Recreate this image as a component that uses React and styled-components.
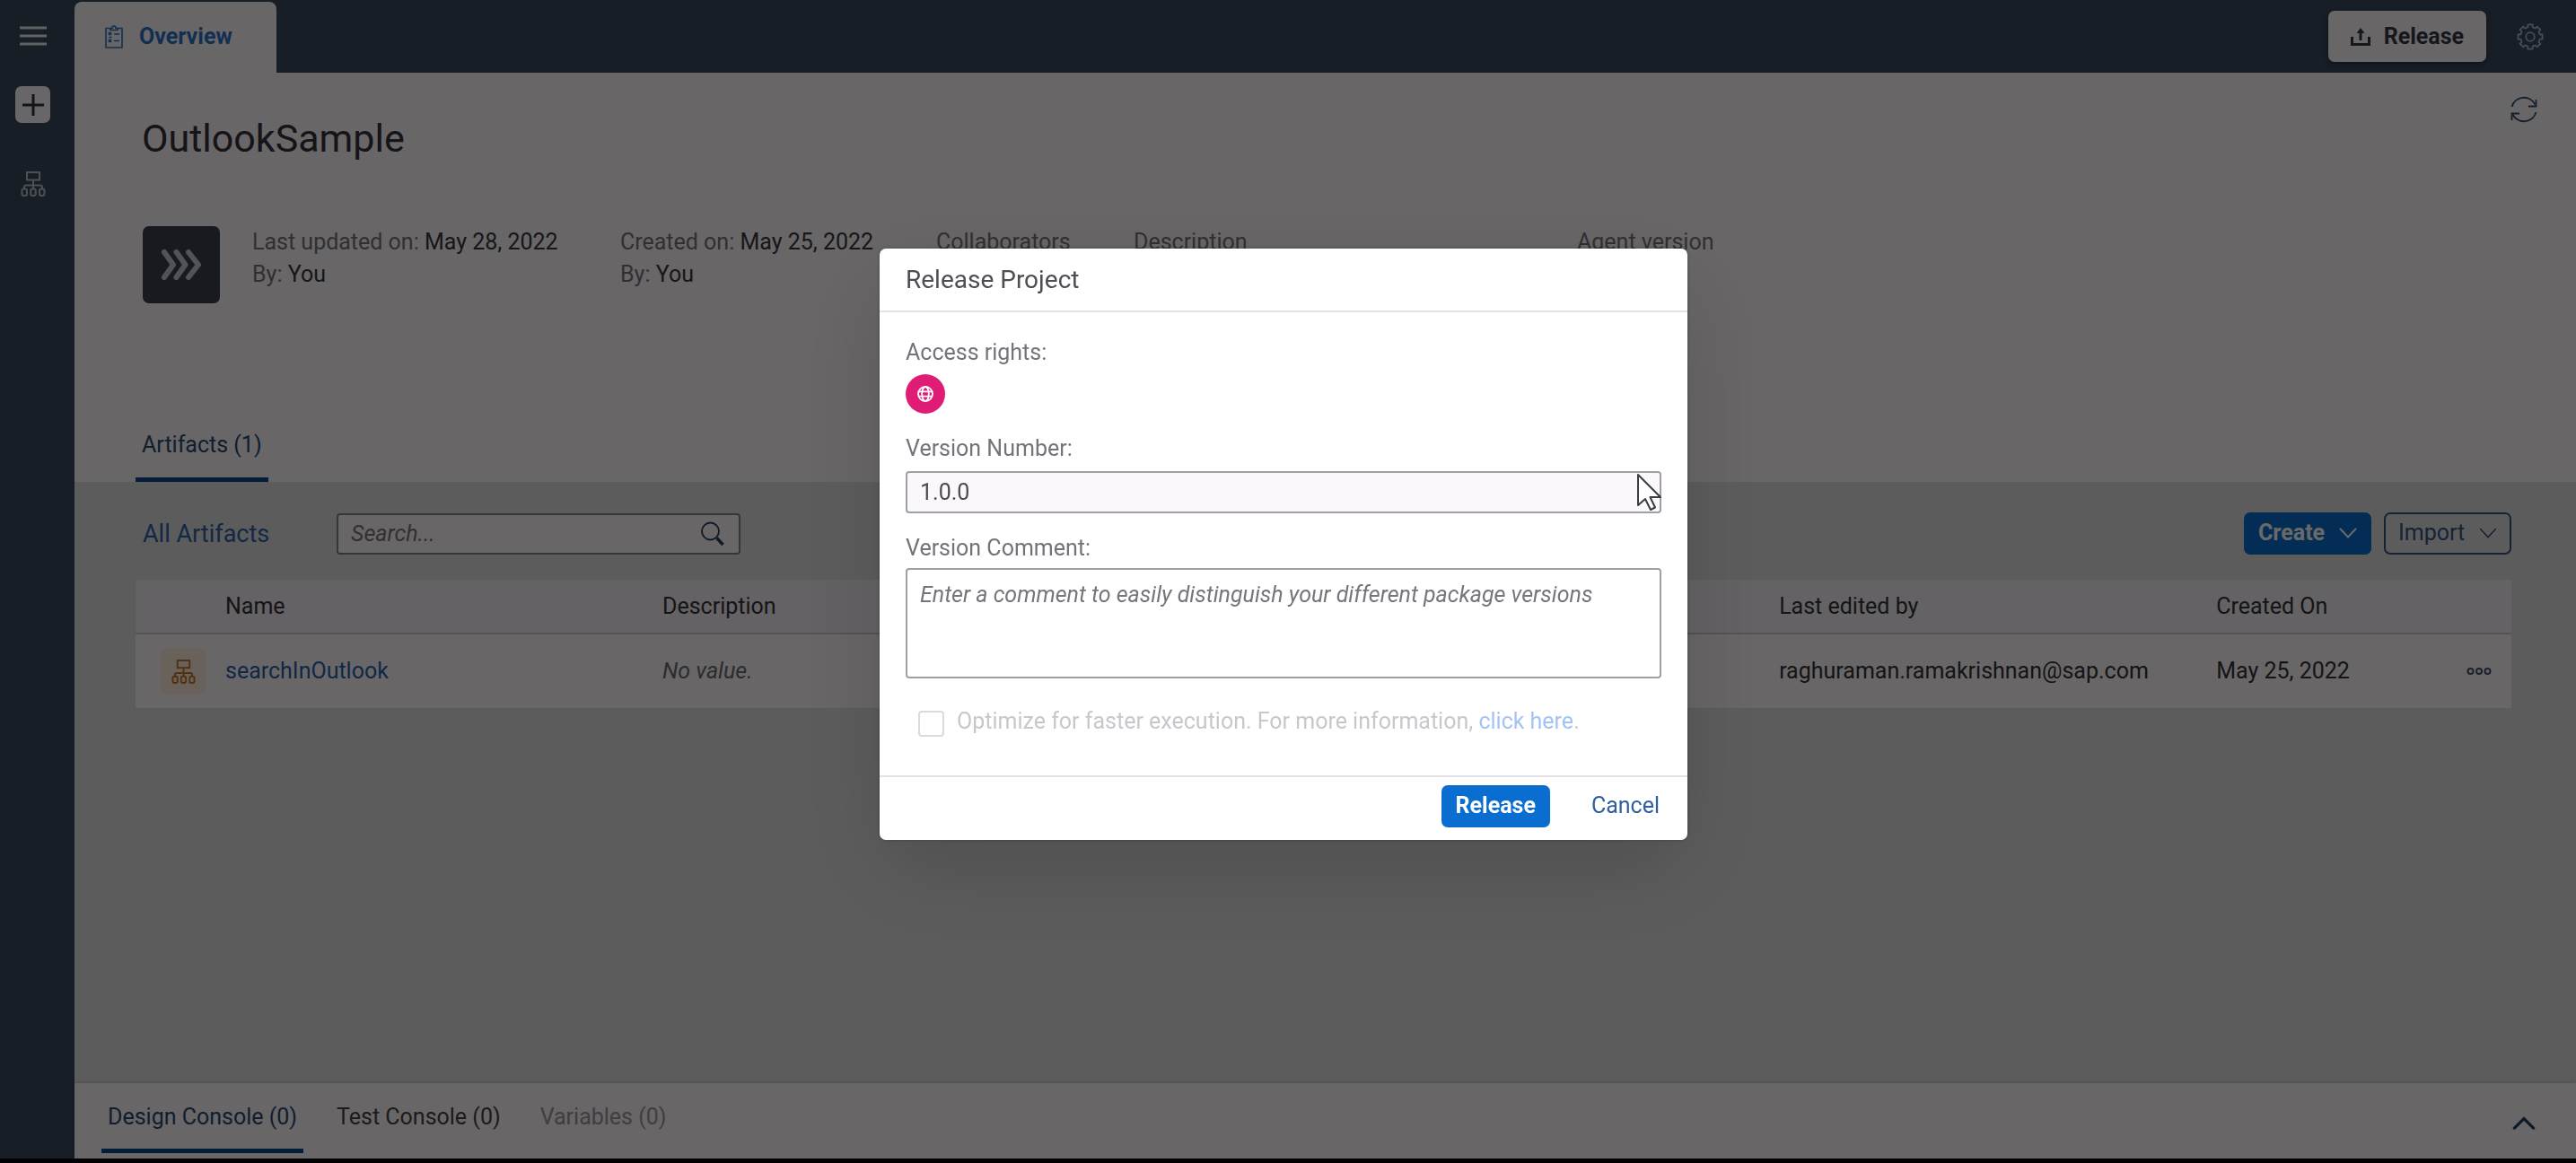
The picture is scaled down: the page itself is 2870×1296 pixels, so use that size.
import React from "react";
import styled, { createGlobalStyle, css } from "styled-components";

const GlobalStyle = createGlobalStyle`
  *, *::before, *::after { box-sizing: border-box; }
  html, body { margin: 0; background: #000; }
  body, button, input, textarea {
    font-family: Roboto, "Liberation Sans", sans-serif;
    font-size: 25px;
    line-height: 36px;
  }
  h1, h2, p { margin: 0; font-weight: 400; }
  button { cursor: pointer; }
`;

const Page = styled.div`
  min-height: 100vh;
  display: flex;
  padding-bottom: 5px;
  background: #000;
`;

const SideBar = styled.nav`
  flex: 0 0 83px;
  display: flex;
  flex-direction: column;
  align-items: center;
  padding: 20px 10px 0 0;
  background: #38495e;
`;

const IconButton = styled.button`
  display: flex;
  align-items: center;
  justify-content: center;
  padding: 0;
  border: 0;
  background: none;
  color: ${(p) => p.$color || "#fff"};
`;

const MenuButton = styled(IconButton)`
  width: 40px;
  height: 40px;
`;

const AddButton = styled(IconButton)`
  width: 39px;
  height: 41px;
  margin-top: 36px;
  border-radius: 7px;
  background: #fff7ff;
`;

const FlowButton = styled(IconButton)`
  width: 40px;
  height: 40px;
  margin-top: 48px;
`;

const Main = styled.div`
  flex: 1;
  min-width: 0;
  display: flex;
  flex-direction: column;
  background: #e0e0e0;
`;

const TopBar = styled.header`
  display: flex;
  align-items: center;
  height: 81px;
  padding-right: 36px;
  background: #38495e;
`;

const OverviewTab = styled.button`
  align-self: flex-end;
  display: flex;
  align-items: center;
  gap: 18px;
  width: 225px;
  height: 79px;
  padding: 0 0 2px 34px;
  border: 0;
  border-radius: 8px 8px 0 0;
  background: #fff7fd;
  color: #2d73c4;
  font-weight: 700;
`;

const ReleaseTopButton = styled.button`
  display: flex;
  align-items: center;
  gap: 15px;
  height: 57px;
  margin: 0 34px 0 auto;
  padding: 0 25px;
  border: 0;
  border-radius: 7px;
  background: #fff7fd;
  box-shadow: 0 2px 6px rgba(0, 0, 0, 0.4);
  color: #333844;
  font-weight: 700;
`;

const ObjectHeader = styled.section`
  display: flex;
  flex-direction: column;
  height: 456px;
  padding: 20px 40px 0 68px;
  background: #fff7fd;
`;

const TitleRow = styled.div`
  display: flex;
  justify-content: space-between;
  align-items: flex-start;
  height: 151px;
  padding-left: 7px;
`;

const Title = styled.h1`
  padding-top: 27px;
  font-size: 43px;
  line-height: 52px;
  color: #33313a;
`;

const RefreshButton = styled(IconButton)`
  width: 36px;
  height: 42px;
`;

const Facts = styled.div`
  display: flex;
  padding-left: 8px;
`;

const Tile = styled.div`
  display: flex;
  align-items: center;
  justify-content: center;
  width: 86px;
  height: 86px;
  margin-right: 36px;
  border-radius: 7px;
  background: #3c414d;
  color: #c4ccd2;
`;

const Fact = styled.div`
  width: ${(p) => p.$width}px;
  color: #77737a;
  white-space: nowrap;

  b {
    color: #38363c;
    font-weight: 400;
  }
`;

const TabButton = styled.button`
  height: ${(p) => p.$height}px;
  padding: 2px 7px 0;
  border: 0;
  border-bottom: 5px solid ${(p) => (p.$active ? "#0b4a8c" : "transparent")};
  border-radius: 3px 3px 0 0;
  background: none;
  color: ${(p) => (p.$active ? "#27496f" : p.disabled ? "#9a969d" : "#454249")};
`;

const SectionTabs = styled.div`
  display: flex;
  margin-top: auto;
`;

const Content = styled.main`
  flex: 1;
  padding: 34px 72px 0 68px;
`;

const Toolbar = styled.div`
  display: flex;
  align-items: center;
  gap: 14px;
  height: 47px;
  margin-bottom: 28px;
  padding-left: 8px;
`;

const ToolbarTitle = styled.h2`
  width: 202px;
  font-size: 27px;
  color: #2f62a8;
  white-space: nowrap;
`;

const SearchBox = styled.div`
  display: flex;
  align-items: center;
  width: 450px;
  height: 46px;
  padding: 0 16px 0 14px;
  border: 2px solid #85818a;
  border-radius: 4px;
  background: #fff7fd;
  color: #2b3f5c;
`;

const SearchInput = styled.input`
  flex: 1;
  min-width: 0;
  padding: 0;
  border: 0;
  outline: 0;
  background: none;
  &::placeholder {
    color: #79757c;
    opacity: 1;
    font-style: italic;
  }
`;

const Spacer = styled.span`
  flex: 1;
`;

const MenuTrigger = styled.button`
  display: flex;
  align-items: center;
  justify-content: space-between;
  width: 142px;
  height: 47px;
  padding: 0 14px 2px;
  border-radius: 7px;
  ${(p) =>
    p.$primary
      ? css`
          border: 2px solid #0a6ed1;
          background: #0a6ed1;
          color: #fff;
          font-weight: 700;
        `
      : css`
          border: 2px solid #3b5482;
          background: none;
          color: #3b5482;
        `}
`;

const Table = styled.table`
  width: 100%;
  table-layout: fixed;
  border-collapse: collapse;
  text-align: left;
  color: #333136;

  th,
  td {
    padding: 0;
    font-weight: 400;
    white-space: nowrap;
  }
  th {
    height: 60px;
    border-bottom: 2px solid #cfc9cf;
    background: #f5eef4;
  }
  td {
    height: 83px;
    background: #fff7fd;
  }
`;

const Col = styled.col`
  width: ${(p) => p.$width};
`;

const ArtifactBadge = styled.span`
  display: flex;
  align-items: center;
  justify-content: center;
  width: 50px;
  height: 52px;
  margin-left: 28px;
  border-radius: 6px;
  background: #fdeedd;
  color: #c8752c;
`;

const ArtifactLink = styled.a`
  color: #2a63a6;
  text-decoration: none;
`;

const Muted = styled.i`
  color: #6b686e;
`;

const MoreButton = styled(IconButton)`
  width: 40px;
  height: 40px;
  margin: 0 16px 0 auto;
`;

const ConsoleBar = styled.footer`
  display: flex;
  align-items: flex-start;
  gap: 30px;
  height: 84px;
  padding: 0 40px 0 30px;
  background: #fff7fd;
  box-shadow: 0 -2px 4px rgba(0, 0, 0, 0.1);
`;

const ExpandButton = styled(IconButton)`
  width: 36px;
  height: 36px;
  margin: 26px 0 0 auto;
`;

const Backdrop = styled.div`
  position: fixed;
  inset: 0;
  display: flex;
  align-items: center;
  justify-content: center;
  padding: 0 10px 83px 0;
  background: rgba(0, 0, 0, 0.59);
`;

const Dialog = styled.section`
  position: relative;
  width: 900px;
  border-radius: 7px;
  background: #fff;
  box-shadow: 0 36px 108px rgba(0, 0, 0, 0.15), 0 0 4px rgba(0, 0, 0, 0.25);
`;

const DialogHeader = styled.header`
  height: 71px;
  padding: 17px 29px 0;
  border-bottom: 2px solid #e6e3e8;
`;

const DialogTitle = styled.h2`
  font-size: 28px;
  color: #4f4d52;
`;

const DialogBody = styled.div`
  display: flex;
  flex-direction: column;
  align-items: stretch;
  padding: 27px 29px 0;
  height: 516px;
`;

const FieldLabel = styled.label`
  color: #75727a;
`;

const AccessBadge = styled.span`
  display: flex;
  align-items: center;
  justify-content: center;
  width: 44px;
  height: 44px;
  margin: 6px 0 21px;
  border-radius: 50%;
  background: #df1d77;
  color: #fff;
`;

const VersionInput = styled.input`
  height: 47px;
  margin: 7px 0 21px;
  padding: 0 14px;
  border: 2px solid #a19ea5;
  border-radius: 4px;
  background: #faf8fc;
  color: #4d4a50;
  outline: 0;
`;

const CommentBox = styled.textarea`
  display: block;
  height: 123px;
  margin-top: 4px;
  padding: 10px 14px;
  border: 2px solid #a19ea5;
  border-radius: 4px;
  outline: 0;
  resize: none;
  background: #fff;
  &::placeholder {
    color: #77747b;
    opacity: 1;
    font-style: italic;
  }
`;

const OptionRow = styled.div`
  display: flex;
  align-items: center;
  gap: 14px;
  margin: 30px 0 0 14px;
  color: #c9c6cc;

  a {
    color: #a3c3f5;
    text-decoration: none;
  }
`;

const CheckBox = styled.input`
  appearance: none;
  flex: none;
  width: 29px;
  height: 29px;
  margin: 4px 0 0;
  border: 2px solid #dcd9df;
  border-radius: 4px;
  background: #fff;
`;

const DialogFooter = styled.footer`
  display: flex;
  align-items: center;
  justify-content: flex-end;
  gap: 30px;
  height: 72px;
  padding: 0 15px 5px;
  border-top: 2px solid #e6e3e8;
`;

const DialogButton = styled.button`
  height: 47px;
  padding: 0 16px 2px;
  border: 0;
  border-radius: 7px;
  background: ${(p) => (p.$primary ? "#0a6ed1" : "none")};
  color: ${(p) => (p.$primary ? "#fff" : "#2f5f9e")};
  font-weight: ${(p) => (p.$primary ? 700 : 400)};
`;

const Pointer = styled.svg`
  position: absolute;
  top: 250px;
  right: 28px;
`;

const Icon = ({ w, h, box, stroke = 2, children }) => (
  <svg
    width={w}
    height={h}
    viewBox={box || `0 0 ${w} ${h}`}
    fill="none"
    stroke="currentColor"
    strokeWidth={stroke}
    aria-hidden="true"
  >
    {children}
  </svg>
);

const FlowIcon = ({ size = 28 }) => (
  <Icon w={size} h={size} box="0 0 28 28">
    <rect x="7" y="1" width="14" height="8.5" />
    <path d="M14 9.5v10M4 20v-2.500q0-2 2-2h16q2 0 2 2V20" />
    <rect x="1.500" y="19.500" width="5.500" height="7.500" rx="2" />
    <rect x="11.200" y="19.500" width="5.500" height="7.500" rx="2" />
    <rect x="21" y="19.500" width="5.500" height="7.500" rx="2" />
  </Icon>
);

const ClipboardIcon = () => (
  <Icon w={20} h={26} stroke={1.6}>
    <path d="M6 3.500H1V25h18V3.500h-5M6 5.500V3.500h2Q8 1 10 1t2 2.500h2v2z" />
    <path d="M10 10h6M10 17.500h6" />
    <path d="M4.500 8.500h2v2h-2zM4.500 16.500h2v2h-2z" />
    <path d="M4.500 13.500h3" />
  </Icon>
);

const UploadIcon = () => (
  <Icon w={22} h={20} stroke={3}>
    <path d="M1.500 10v8.500h19V10" />
    <path d="M11 14V4" />
    <path d="M6.500 6 11 0l4.500 6z" fill="currentColor" stroke="none" />
  </Icon>
);

const gearPath = (() => {
  const teeth = 8;
  const step = (Math.PI * 2) / teeth;
  const points = [];
  for (let i = 0; i < teeth; i += 1) {
    const a = i * step - Math.PI / 2;
    [
      [-0.25, 11],
      [-0.19, 13.8],
      [0.19, 13.8],
      [0.25, 11],
    ].forEach(([d, r]) => {
      points.push(`${(15 + r * Math.cos(a + d)).toFixed(2)} ${(15 + r * Math.sin(a + d)).toFixed(2)}`);
    });
  }
  return `M${points.join("L")}Z`;
})();

const GearIcon = () => (
  <Icon w={30} h={30} stroke={1.8}>
    <path d={gearPath} strokeLinejoin="round" />
    <circle cx="15" cy="15" r="4.800" />
  </Icon>
);

const RefreshIcon = () => (
  <Icon w={30} h={30} stroke={1.8}>
    <path d="M1.500 12A14 14 0 0 1 27.500 9.500M28.500 18A14 14 0 0 1 2.500 20.500" />
    <path d="M28.500 4v7.500H20M1.500 27v-7.500H10" />
  </Icon>
);

const Chevron = ({ w = 20, h = 12, up, stroke = 2 }) => (
  <Icon w={w} h={h} box="0 0 20 12" stroke={stroke}>
    <path d={up ? "M1.500 10.500 10 2l8.500 8.500" : "M1.500 1.500 10 10.500l8.500-9"} strokeLinecap="round" />
  </Icon>
);

const consoleTabs = [
  { label: "Design Console (0)", active: true },
  { label: "Test Console (0)" },
  { label: "Variables (0)", disabled: true },
];

export default function App() {
  return (
    <>
      <GlobalStyle />
      <Page>
        <SideBar>
          <MenuButton aria-label="Menu" $color="#e8eef2">
            <Icon w={30} h={24} stroke={3}>
              <path d="M0 3h30M0 12h30M0 21h30" />
            </Icon>
          </MenuButton>
          <AddButton aria-label="Add" $color="#33333b">
            <Icon w={26} h={26} stroke={3}>
              <path d="M13 1v24M1 13h24" />
            </Icon>
          </AddButton>
          <FlowButton aria-label="Processes" $color="#b9bfcd">
            <FlowIcon />
          </FlowButton>
        </SideBar>

        <Main>
          <TopBar>
            <OverviewTab>
              <ClipboardIcon />
              Overview
            </OverviewTab>
            <ReleaseTopButton>
              <UploadIcon />
              Release
            </ReleaseTopButton>
            <IconButton aria-label="Settings" $color="#a9bccb">
              <GearIcon />
            </IconButton>
          </TopBar>

          <ObjectHeader>
            <TitleRow>
              <Title>OutlookSample</Title>
              <RefreshButton aria-label="Refresh" $color="#2e4d70">
                <RefreshIcon />
              </RefreshButton>
            </TitleRow>
            <Facts>
              <Tile>
                <Icon w={46} h={36} stroke={6}>
                  <path
                    d="M4 4 14 18 4 32M17.500 4l10 14-10 14M31 4l11 14-11 14"
                    strokeLinecap="round"
                    strokeLinejoin="round"
                  />
                </Icon>
              </Tile>
              <Fact $width={410}>
                Last updated on: <b>May 28, 2022</b>
                <br />
                By: <b>You</b>
              </Fact>
              <Fact $width={352}>
                Created on: <b>May 25, 2022</b>
                <br />
                By: <b>You</b>
              </Fact>
              <Fact $width={220}>Collaborators</Fact>
              <Fact $width={494}>Description</Fact>
              <Fact $width={200}>Agent version</Fact>
            </Facts>
            <SectionTabs>
              <TabButton $active $height={80}>
                Artifacts (1)
              </TabButton>
            </SectionTabs>
          </ObjectHeader>

          <Content>
            <Toolbar>
              <ToolbarTitle>All Artifacts</ToolbarTitle>
              <SearchBox>
                <SearchInput type="text" placeholder="Search..." aria-label="Search artifacts" />
                <Icon w={26} h={28} stroke={1.8}>
                  <circle cx="10.500" cy="11" r="9.500" />
                  <path d="M17.500 18.500 24.500 26" strokeWidth="3.500" />
                </Icon>
              </SearchBox>
              <Spacer />
              <MenuTrigger $primary>
                Create <Chevron />
              </MenuTrigger>
              <MenuTrigger>
                Import <Chevron stroke={1.6} />
              </MenuTrigger>
            </Toolbar>

            <Table>
              <colgroup>
                <Col $width="100px" />
                <Col $width="18.4%" />
                <Col $width="18.4%" />
                <Col $width="28.6%" />
                <Col $width="18.4%" />
                <Col />
                <Col $width="80px" />
              </colgroup>
              <thead>
                <tr>
                  <th />
                  <th>Name</th>
                  <th>Description</th>
                  <th />
                  <th>Last edited by</th>
                  <th>Created On</th>
                  <th />
                </tr>
              </thead>
              <tbody>
                <tr>
                  <td>
                    <ArtifactBadge>
                      <FlowIcon size={27} />
                    </ArtifactBadge>
                  </td>
                  <td>
                    <ArtifactLink href="#searchInOutlook">searchInOutlook</ArtifactLink>
                  </td>
                  <td>
                    <Muted>No value.</Muted>
                  </td>
                  <td />
                  <td>raghuraman.ramakrishnan@sap.com</td>
                  <td>May 25, 2022</td>
                  <td>
                    <MoreButton aria-label="More actions" $color="#44546a">
                      <Icon w={28} h={10} stroke={2}>
                        <circle cx="4.500" cy="5" r="3" />
                        <circle cx="14" cy="5" r="3" />
                        <circle cx="23.500" cy="5" r="3" />
                      </Icon>
                    </MoreButton>
                  </td>
                </tr>
              </tbody>
            </Table>
          </Content>

          <ConsoleBar>
            {consoleTabs.map((tab) => (
              <TabButton key={tab.label} $active={tab.active} disabled={tab.disabled} $height={78}>
                {tab.label}
              </TabButton>
            ))}
            <ExpandButton aria-label="Expand console" $color="#1d3f66">
              <Chevron up w={26} h={15} stroke={2.6} />
            </ExpandButton>
          </ConsoleBar>
        </Main>
      </Page>

      <Backdrop>
        <Dialog role="dialog" aria-modal="true" aria-labelledby="release-title">
          <DialogHeader>
            <DialogTitle id="release-title">Release Project</DialogTitle>
          </DialogHeader>
          <DialogBody>
            <FieldLabel as="span">Access rights:</FieldLabel>
            <AccessBadge>
              <Icon w={18} h={18} stroke={1.8}>
                <circle cx="9" cy="9" r="8" />
                <ellipse cx="9" cy="9" rx="3.800" ry="8" />
                <path d="M1.500 6.300h15M1.500 11.700h15" />
              </Icon>
            </AccessBadge>
            <FieldLabel htmlFor="version-number">Version Number:</FieldLabel>
            <VersionInput id="version-number" type="text" defaultValue="1.0.0" />
            <FieldLabel htmlFor="version-comment">Version Comment:</FieldLabel>
            <CommentBox
              id="version-comment"
              placeholder="Enter a comment to easily distinguish your different package versions"
            />
            <OptionRow>
              <CheckBox id="optimize" type="checkbox" disabled />
              <span>
                <label htmlFor="optimize">Optimize for faster execution. For more information, </label>
                <a href="#more">click here</a>.
              </span>
            </OptionRow>
          </DialogBody>
          <DialogFooter>
            <DialogButton $primary>Release</DialogButton>
            <DialogButton>Cancel</DialogButton>
          </DialogFooter>
          <Pointer width="29" height="43" viewBox="0 0 29 43" aria-hidden="true">
            <path
              d="M2 2v34l8-7 6 12 5-2.500L15.500 27H27z"
              fill="#fff"
              stroke="#3c3a42"
              strokeWidth="2"
              strokeLinejoin="round"
            />
          </Pointer>
        </Dialog>
      </Backdrop>
    </>
  );
}
